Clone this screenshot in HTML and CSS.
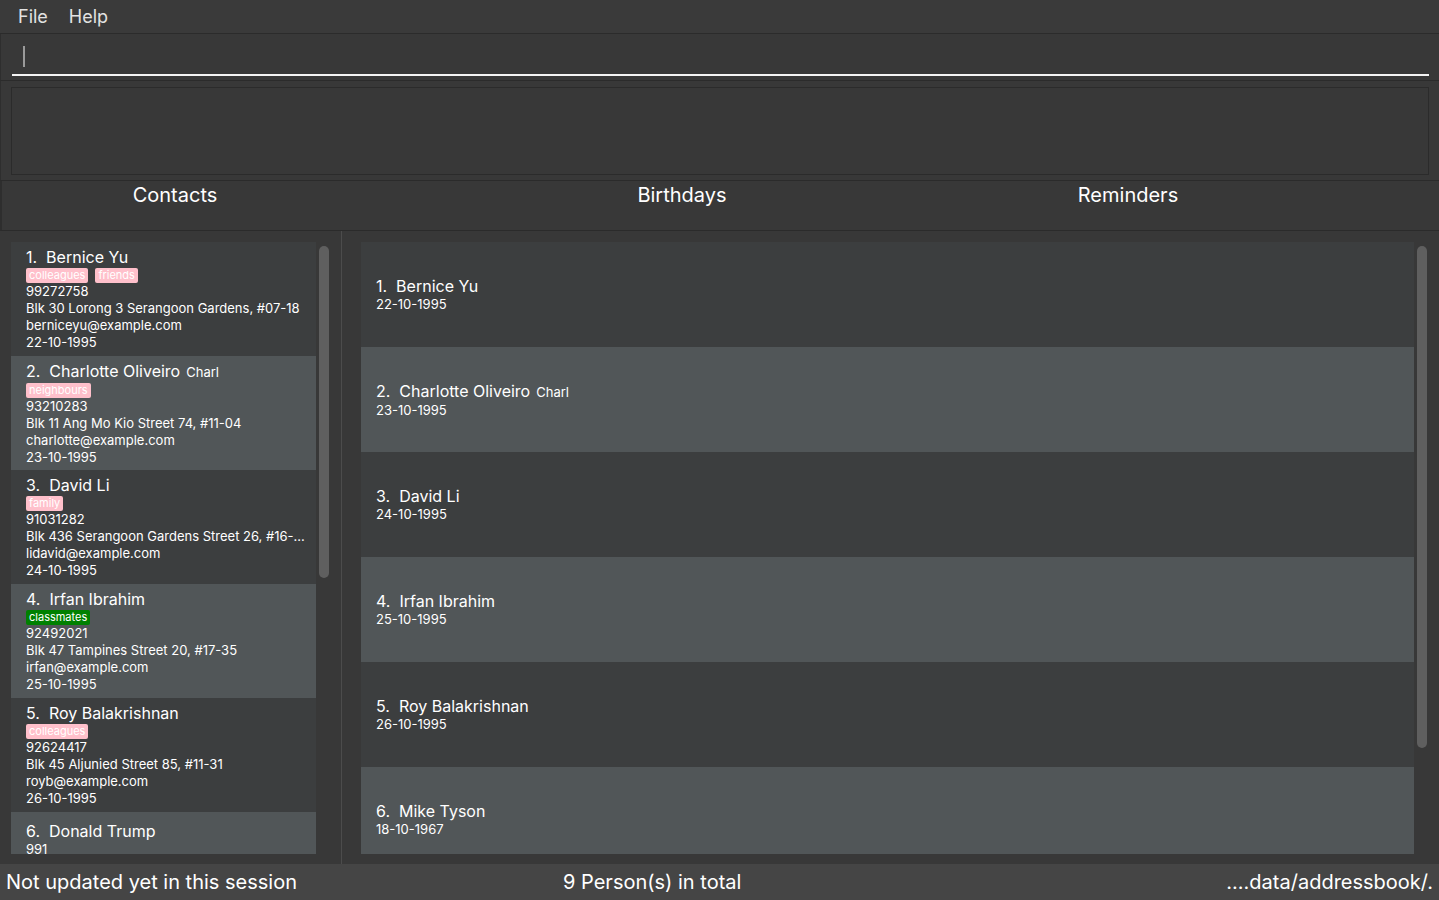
FILE: index.html
```html
<!DOCTYPE html>
<html>
<head>
<meta charset="utf-8">
<link rel="stylesheet" href="styles.css">
</head>
<body>
<div class="app">
  <div class="menubar">
    <span class="menu-item">File</span>
    <span class="menu-item">Help</span>
  </div>
  <div class="command">
    <div class="command-field"><span class="caret"></span></div>
  </div>
  <div class="result">
    <div class="result-box"></div>
  </div>
  <div class="tabs">
    <div class="tab">Contacts</div>
    <div class="tab">Birthdays</div>
    <div class="tab">Reminders</div>
    <div></div>
  </div>
  <div class="main">
    <div class="left-panel">
      <div class="list person-list">
        <div class="pcard even">
          <div class="name">1.&nbsp; Bernice Yu</div>
          <div class="tags"><span class="tag pink">colleagues</span><span class="tag pink">friends</span></div>
          <div class="line">99272758</div>
          <div class="line">Blk 30 Lorong 3 Serangoon Gardens, #07-18</div>
          <div class="line">berniceyu@example.com</div>
          <div class="line">22-10-1995</div>
        </div>
        <div class="pcard odd">
          <div class="name">2.&nbsp; Charlotte Oliveiro<span class="nick">Charl</span></div>
          <div class="tags"><span class="tag pink">neighbours</span></div>
          <div class="line">93210283</div>
          <div class="line">Blk 11 Ang Mo Kio Street 74, #11-04</div>
          <div class="line">charlotte@example.com</div>
          <div class="line">23-10-1995</div>
        </div>
        <div class="pcard even">
          <div class="name">3.&nbsp; David Li</div>
          <div class="tags"><span class="tag pink">family</span></div>
          <div class="line">91031282</div>
          <div class="line">Blk 436 Serangoon Gardens Street 26, #16-...</div>
          <div class="line">lidavid@example.com</div>
          <div class="line">24-10-1995</div>
        </div>
        <div class="pcard odd">
          <div class="name">4.&nbsp; Irfan Ibrahim</div>
          <div class="tags"><span class="tag green">classmates</span></div>
          <div class="line">92492021</div>
          <div class="line">Blk 47 Tampines Street 20, #17-35</div>
          <div class="line">irfan@example.com</div>
          <div class="line">25-10-1995</div>
        </div>
        <div class="pcard even">
          <div class="name">5.&nbsp; Roy Balakrishnan</div>
          <div class="tags"><span class="tag pink">colleagues</span></div>
          <div class="line">92624417</div>
          <div class="line">Blk 45 Aljunied Street 85, #11-31</div>
          <div class="line">royb@example.com</div>
          <div class="line">26-10-1995</div>
        </div>
        <div class="pcard odd notags">
          <div class="name">6.&nbsp; Donald Trump</div>
          <div class="line">991</div>
        </div>
      </div>
      <div class="track"><div class="thumb thumb-left"></div></div>
    </div>
    <div class="right-panel">
      <div class="list bday-list">
        <div class="bcard even">
          <div class="name">1.&nbsp; Bernice Yu</div>
          <div class="line">22-10-1995</div>
        </div>
        <div class="bcard odd">
          <div class="name">2.&nbsp; Charlotte Oliveiro<span class="nick">Charl</span></div>
          <div class="line">23-10-1995</div>
        </div>
        <div class="bcard even">
          <div class="name">3.&nbsp; David Li</div>
          <div class="line">24-10-1995</div>
        </div>
        <div class="bcard odd">
          <div class="name">4.&nbsp; Irfan Ibrahim</div>
          <div class="line">25-10-1995</div>
        </div>
        <div class="bcard even">
          <div class="name">5.&nbsp; Roy Balakrishnan</div>
          <div class="line">26-10-1995</div>
        </div>
        <div class="bcard odd">
          <div class="name">6.&nbsp; Mike Tyson</div>
          <div class="line">18-10-1967</div>
        </div>
      </div>
      <div class="track"><div class="thumb thumb-right"></div></div>
    </div>
  </div>
  <div class="status">
    <div class="st-left">Not updated yet in this session</div>
    <div class="st-mid">9 Person(s) in total</div>
    <div class="st-right">....data/addressbook/.</div>
  </div>
</div>
</body>
</html>
```

FILE: styles.css
```css
* { box-sizing: border-box; }
html, body { margin: 0; padding: 0; }
body {
  background: #383838;
  font-family: "Inter", "Open Sans", "Liberation Sans", sans-serif;
  color: #ffffff;
  width: 1439px;
  height: 900px;
  overflow: hidden;
}
.app { display: flex; flex-direction: column; height: 900px; }

.menubar {
  height: 34px;
  border-bottom: 1px solid #2b2b2b;
  display: flex;
  align-items: center;
  padding-left: 18px;
  gap: 21px;
  background: #3a3a3a;
}
.menu-item { font-size: 18px; color: #e2e2e2; }

.command {
  height: 47px;
  border-bottom: 1px solid #2b2b2b;
  border-left: 1px solid #2e2e2e;
  padding: 0 10px 0 11px;
}
.command-field {
  height: 42px;
  border-bottom: 2px solid #f4f4f4;
  padding: 12px 0 0 11px;
}
.caret { display: block; width: 2px; height: 21px; background: #9a9a9a; }

.result {
  height: 100px;
  border-bottom: 1px solid #2b2b2b;
  border-left: 1px solid #2e2e2e;
  padding: 6px 10px 5px 10px;
}
.result-box { height: 100%; border: 1px solid #2b2b2b; }

.tabs {
  height: 50px;
  border-bottom: 1px solid #2b2b2b;
  border-left: 2px solid #2e2e2e;
  display: grid;
  grid-template-columns: 346px 668px 224px 1fr;
  padding-top: 2px;
}
.tab { text-align: center; font-size: 20px; line-height: 24px; color: #ffffff; }

.main { height: 633px; display: flex; }
.left-panel {
  width: 342px;
  border-right: 1px solid #4c4c4c;
  display: flex;
  padding: 11px 0 10px 11px;
}
.right-panel {
  flex: 1;
  display: flex;
  padding: 11px 0 10px 19px;
}
.list { overflow: hidden; display: flex; flex-direction: column; }
.person-list { width: 305px; }
.bday-list { width: 1053px; }
.track { width: 10px; margin-left: 3px; padding-top: 4px; }
.thumb { width: 10px; background: #5f5f5f; border-radius: 5px; }
.thumb-left { height: 332px; }
.thumb-right { height: 502px; }

.even { background: #3c3e3f; }
.odd { background: #515658; }

.pcard {
  flex: 0 0 114px;
  padding: 5px 8px 0 15px;
}
.pcard.notags { padding-top: 9px; }
.name { font-size: 16px; line-height: 20px; color: #ffffff; white-space: nowrap; }
.nick { font-size: 13px; margin-left: 6px; }
.tags { display: flex; gap: 7px; margin-top: 1px; height: 15px; }
.tag {
  font-size: 11px;
  line-height: 15px;
  height: 15px;
  padding: 0 3px;
  border-radius: 2px;
  color: #ffffff;
}
.pink { background: #ffc0cb; }
.green { background: #008000; }
.line { font-size: 13px; line-height: 17px; color: #ffffff; white-space: nowrap; }

.bcard {
  flex: 0 0 105px;
  padding: 0 15px;
  display: flex;
  flex-direction: column;
  justify-content: center;
}

.status {
  height: 36px;
  background: #454545;
  display: grid;
  grid-template-columns: 557px 1fr auto;
  align-items: center;
  font-size: 20px;
  color: #ffffff;
}
.st-left { padding-left: 6px; }
.st-mid { padding-left: 6px; }
.st-right { padding-right: 6px; }
```
